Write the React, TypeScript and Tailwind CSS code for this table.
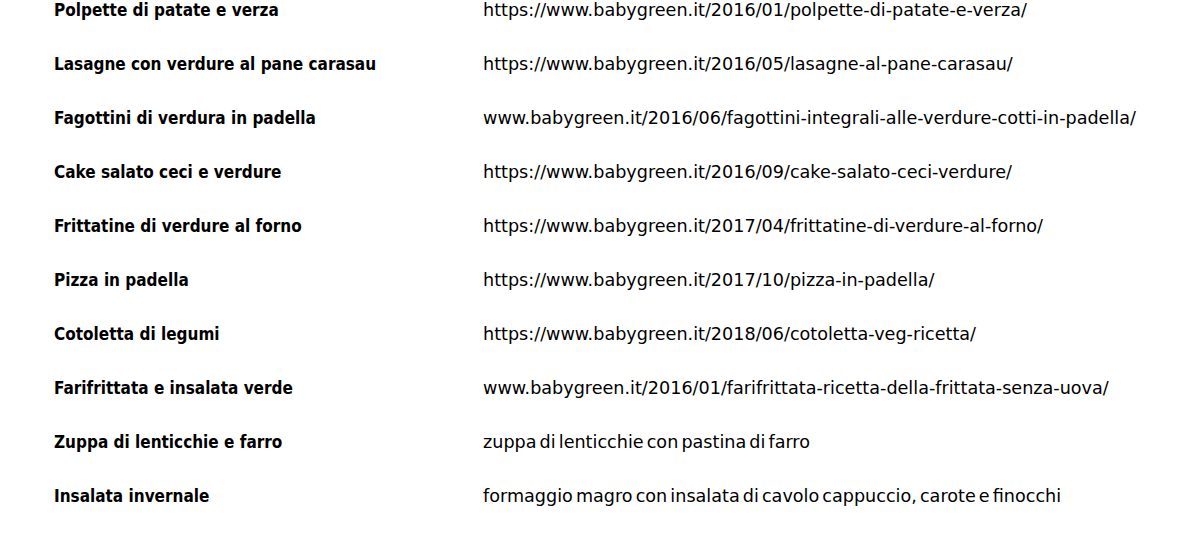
import React from 'react';

const recipes: [string, string][] = [
  ['Polpette di patate e verza', 'https://www.babygreen.it/2016/01/polpette-di-patate-e-verza/'],
  ['Lasagne con verdure al pane carasau', 'https://www.babygreen.it/2016/05/lasagne-al-pane-carasau/'],
  ['Fagottini di verdura in padella', 'www.babygreen.it/2016/06/fagottini-integrali-alle-verdure-cotti-in-padella/'],
  ['Cake salato ceci e verdure', 'https://www.babygreen.it/2016/09/cake-salato-ceci-verdure/'],
  ['Frittatine di verdure al forno', 'https://www.babygreen.it/2017/04/frittatine-di-verdure-al-forno/'],
  ['Pizza in padella', 'https://www.babygreen.it/2017/10/pizza-in-padella/'],
  ['Cotoletta di legumi', 'https://www.babygreen.it/2018/06/cotoletta-veg-ricetta/'],
  ['Farifrittata e insalata verde', 'www.babygreen.it/2016/01/farifrittata-ricetta-della-frittata-senza-uova/'],
  ['Zuppa di lenticchie e farro', 'zuppa di lenticchie con pastina di farro'],
  ['Insalata invernale', 'formaggio magro con insalata di cavolo cappuccio, carote e finocchi'],
];

export default function App() {
  return (
    <div className="bg-white text-black w-[1190px] h-[533px] overflow-hidden pl-[54px]">
      <div className="flex flex-col gap-[34px]">
        {recipes.map(([name, link]) => (
          <div key={name} className="flex items-baseline h-[20px] leading-[20px] whitespace-nowrap">
            <span className="w-[429px] shrink-0 font-bold text-[17px] font-['DejaVu_Sans_Condensed',sans-serif]">
              {name}
            </span>
            <span className="text-[17.6px] [word-spacing:-2.5px] font-['DejaVu_Sans',sans-serif]">{link}</span>
          </div>
        ))}
      </div>
    </div>
  );
}
